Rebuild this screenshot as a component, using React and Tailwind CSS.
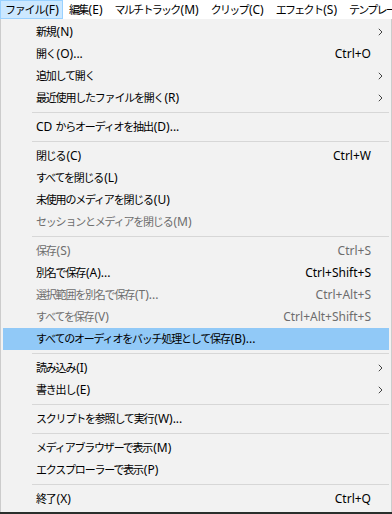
import React from 'react';

const menuBar = ['ファイル(F)', '編集(E)', 'マルチトラック(M)', 'クリップ(C)', 'エフェクト(S)', 'テンプレート(T)'];

const items = [
  { label: '新規(N)', sub: true },
  { label: '開く(O)...', key: 'Ctrl+O' },
  { label: '追加して開く', sub: true },
  { label: '最近使用したファイルを開く(R)', sub: true },
  'sep',
  { label: 'CD からオーディオを抽出(D)...' },
  'sep',
  { label: '閉じる(C)', key: 'Ctrl+W' },
  { label: 'すべてを閉じる(L)' },
  { label: '未使用のメディアを閉じる(U)' },
  { label: 'セッションとメディアを閉じる(M)', off: true },
  'sep',
  { label: '保存(S)', key: 'Ctrl+S', off: true },
  { label: '別名で保存(A)...', key: 'Ctrl+Shift+S' },
  { label: '選択範囲を別名で保存(T)...', key: 'Ctrl+Alt+S', off: true },
  { label: 'すべてを保存(V)', key: 'Ctrl+Alt+Shift+S', off: true },
  { label: 'すべてのオーディオをバッチ処理として保存(B)...', hover: true },
  'sep',
  { label: '読み込み(I)', sub: true },
  { label: '書き出し(E)', sub: true },
  'sep',
  { label: 'スクリプトを参照して実行(W)...' },
  'sep',
  { label: 'メディアブラウザーで表示(M)' },
  { label: 'エクスプローラーで表示(P)' },
  'sep',
  { label: '終了(X)', key: 'Ctrl+Q' },
];

const CJK = /[\u3000-\u9fff\uff00-\uffef]/;

// CJK runs are narrower in the original UI font, so tighten them separately
function Label({ text, tight }) {
  const parts = text.split(/([\u3000-\u9fff\uff00-\uffef]+)/).filter(Boolean);
  return (
    <>
      {parts.map((p, i) =>
        CJK.test(p) ? (
          <span
            key={i}
            className={tight ? 'text-[11px] tracking-[-1.7px] pr-[1px]' : 'text-[11px] tracking-[-1.2px] pr-[1px]'}
          >
            {p}
          </span>
        ) : (
          <span key={i} className="text-[12px]">{p}</span>
        )
      )}
    </>
  );
}

function Chevron() {
  return (
    <svg width="5" height="8" viewBox="0 0 5 8" className="block">
      <path d="M0.8 0.8 L4 4 L0.8 7.2" fill="none" stroke="#444" strokeWidth="1" />
    </svg>
  );
}

export default function App() {
  return (
    <div
      className="w-[392px] h-[514px] overflow-hidden bg-[#2a2f2c] flex flex-col text-[12px] leading-none"
      style={{ fontFamily: '"Noto Sans", "Noto Sans CJK JP", sans-serif' }}
    >
      <div className="h-[19px] bg-white flex items-stretch shrink-0 whitespace-nowrap overflow-hidden">
        {menuBar.map((m, i) => (
          <div
            key={m}
            className={
              i === 0
                ? 'w-[63px] shrink-0 pl-[4px] flex items-center bg-[#cce8ff] border border-[#99d1ff] text-black'
                : 'shrink-0 px-[6px] flex items-center text-black'
            }
          >
            <Label text={m} tight={i > 0} />
          </div>
        ))}
      </div>
      <div className="h-[493px] bg-[#f2f2f2] border-l border-r border-[#cccccc] px-[2px] py-[2px] flex flex-col shrink-0">
        {items.map((it, i) =>
          it === 'sep' ? (
            <div key={i} className="h-[7px] flex items-center pl-[29px] shrink-0">
              <div className="h-px w-full bg-[#d7d7d7]" />
            </div>
          ) : (
            <div
              key={i}
              className={
                'h-[22px] shrink-0 flex items-center pl-[33px] whitespace-nowrap ' +
                (it.hover ? 'bg-[#91c9f7] ' : '') +
                (it.off ? 'text-[#6d6d6d]' : 'text-black')
              }
            >
              <span className="flex-1">
                <Label text={it.label} />
              </span>
              {it.key && <span>{it.key}</span>}
              <span className="w-[18px] flex justify-center">{it.sub && <Chevron />}</span>
            </div>
          )
        )}
      </div>
    </div>
  );
}
